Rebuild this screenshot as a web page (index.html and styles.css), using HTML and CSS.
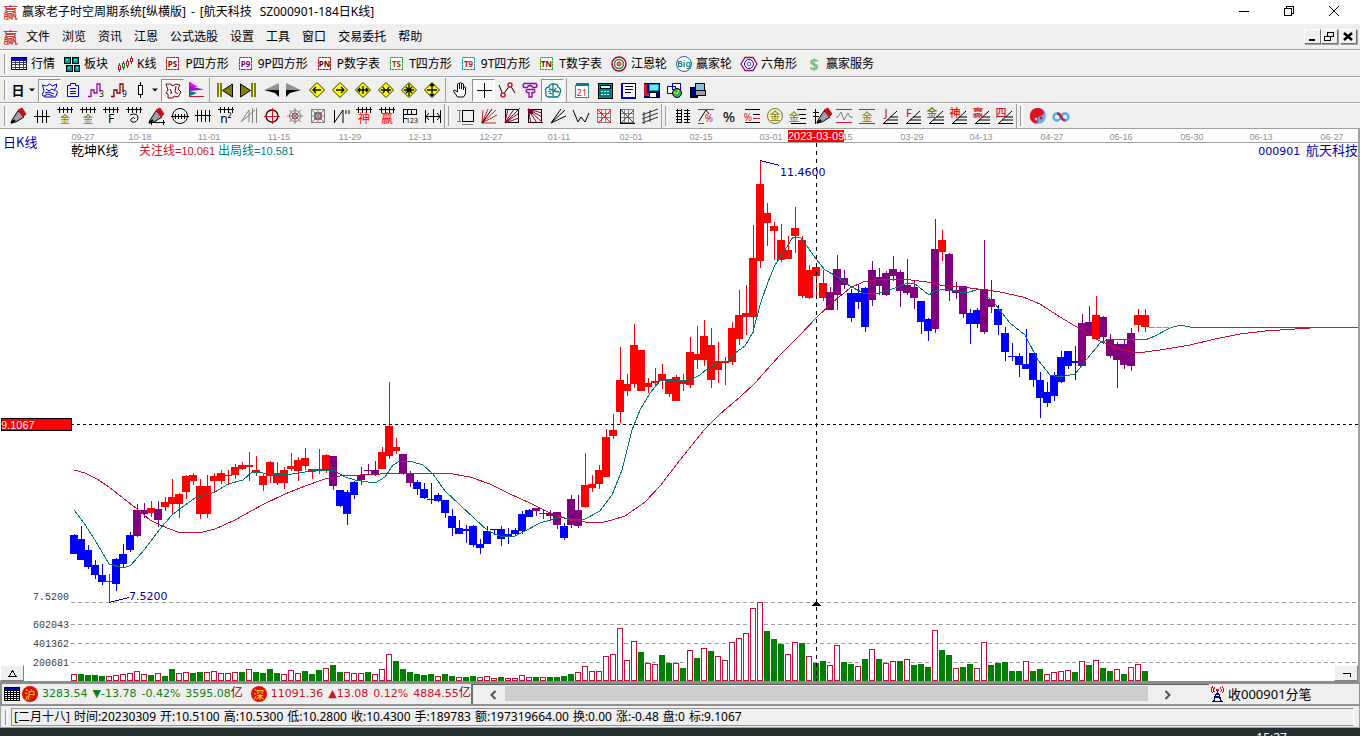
FILE: index.html
```html
<!DOCTYPE html>
<html lang="zh-CN">
<head>
<meta charset="utf-8">
<title>赢家老子时空周期系统[纵横版]</title>
<link rel="stylesheet" href="styles.css">
</head>
<body>
<div class="app">
  <header class="titlebar">
    <span class="brand">赢</span>
    <h1 class="title"><span>赢家老子时空周期系统[纵横版]</span><span>-</span><span>[航天科技</span><span class="symbol">SZ000901-184日K线]</span></h1>
    <div class="winctl">
      <button aria-label="最小化"><svg width="12" height="12"><path d="M1 6.5H11"/></svg></button>
      <button aria-label="还原"><svg width="12" height="12"><path d="M1.5 3.5h7v7h-7zM3.5 3.5v-2h7v7h-2"/></svg></button>
      <button aria-label="关闭"><svg width="12" height="12" class="smooth"><path d="M1 1L11 11M11 1L1 11"/></svg></button>
    </div>
  </header>
  <nav class="menubar">
    <span class="brand">赢</span>
    <button>文件</button><button>浏览</button><button>资讯</button><button>江恩</button><button>公式选股</button><button>设置</button><button>工具</button><button>窗口</button><button>交易委托</button><button>帮助</button>
    <div class="mdictl">
      <button aria-label="最小化窗口"><svg width="12" height="11"><path d="M3 9h6" stroke-width="2"/></svg></button>
      <button aria-label="还原窗口"><svg width="12" height="11"><path d="M1.5 5.5h6v4h-6zM1 5h7M4.5 4.5v-3h6v4h-3M4 1h7"/></svg></button>
      <button aria-label="关闭窗口" class="gap"><svg width="12" height="11" class="smooth"><path d="M2 2L10 9M10 2L2 9" stroke-width="2.4"/></svg></button>
    </div>
  </nav>
  <div class="toolbar labelled" id="bar-main"><i class="grip"></i></div>
  <div class="toolbar" id="bar-view"><i class="grip"></i></div>
  <div class="toolbar" id="bar-draw"><i class="grip"></i></div>
  <main class="chart">
    <svg id="plot" role="img" aria-label="航天科技 日K线"></svg>
    <button class="corner left" aria-label="展开"><svg width="11" height="9"><path d="M5.5 1.5L9 7.5H2z" fill="none" stroke="#000"/></svg></button>
    <button class="corner right" aria-label="收起"><svg width="11" height="9"><path d="M2 4.5h7v3" fill="none" stroke="#000"/></svg></button>
  </main>
  <section class="quotes">
    <div class="index">
      <svg class="sheet" width="16" height="14"><path d="M0 0h16v14H0z" fill="#000"/><path d="M1 1h14v2H1z" fill="#0000c0"/><path d="M1 4.500h14M1 6.500h14M1 8.500h14M1 10.500h14M1 12.500h14" stroke="#fff" stroke-dasharray="2 1"/></svg>
      <b class="badge">沪</b>
      <p class="down"><span>3283.54</span><span>▼-13.78</span><span>-0.42%</span><span>3595.08<em>亿</em></span></p>
      <b class="badge second">深</b>
      <p class="up"><span>11091.36</span><span>▲13.08</span><span>0.12%</span><span>4884.55<em>亿</em></span></p>
    </div>
    <div class="scroll">
      <button aria-label="向左滚动"><svg width="8" height="10"><path d="M6.500 1L2.500 5L6.500 9"/></svg></button>
      <div class="track"><div class="thumb"></div></div>
      <button aria-label="向右滚动"><svg width="8" height="10"><path d="M1.500 1L5.500 5L1.500 9"/></svg></button>
    </div>
    <div class="feed">
      <svg width="13" height="17"><path d="M6.500 5v3M5 8l-2 7M8 8l2 7M5 8h3M4 11h5M1 15.500h11" fill="none" stroke="#000080" stroke-width="1.500"/><circle cx="6.500" cy="4" r="1.500" fill="#d01020"/><path d="M3.500 1.500q-1.500 2.500 0 5M9.500 1.500q1.500 2.500 0 5M1.500.500q-2 3.500 0 7M11.500.500q2 3.500 0 7" fill="none" stroke="#d01020"/></svg>
      <span>收000901分笔</span>
    </div>
  </section>
  <footer class="status"><i class="grip"></i><p><span>[二月十八]</span><span>时间:20230309</span><span>开:10.5100</span><span>高:10.5300</span><span>低:10.2800</span><span>收:10.4300</span><span>手:189783</span><span>额:197319664.00</span><span>换:0.00</span><span>涨:-0.48</span><span>盘:0</span><span>标:9.1067</span></p></footer>
  <div class="taskbar"><time>15:27</time></div>
</div>
<script src="app.js"></script>
</body>
</html>
```

FILE: styles.css
```css
* { box-sizing: border-box; }
body {
  margin: 0;
  font: 12px/16px "Noto Sans", "Noto Sans CJK SC", sans-serif;
  color: #000;
  background: #efefef;
}
button { font: inherit; color: inherit; background: none; border: 0; padding: 0; margin: 0; }
.app { display: flex; flex-direction: column; height: 100vh; min-height: 480px; overflow: hidden; }
.app svg { shape-rendering: crispEdges; display: block; flex: none; }
.app svg.smooth, .app .smooth { shape-rendering: auto; }

.brand { color: #c01020; font: 15px/18px "Noto Sans CJK SC", sans-serif; width: 15px; }
.titlebar { display: flex; align-items: center; flex: none; height: 24px; padding-left: 3px; gap: 4px; background: #fff; }
.title { display: flex; gap: 5px; margin: 0; font-size: 12px; font-weight: 400; line-height: 18px; white-space: nowrap; }
.title .symbol { padding-left: 3px; }
.winctl { display: flex; margin-left: auto; padding: 0 4px 3px 0; }
.winctl button { width: 45px; height: 20px; display: flex; align-items: center; justify-content: center; }
.winctl path, .mdictl path { fill: none; stroke: #000; }

.menubar { display: flex; align-items: center; flex: none; height: 26px; padding: 0 3px; border-bottom: 1px solid #a0a0a0; }
.menubar > button { padding: 0 6px; white-space: nowrap; }
.menubar > .brand + button { margin-left: 2px; }
.mdictl { display: flex; margin-left: auto; }
.mdictl button { width: 17px; height: 15px; padding: 1px; border: 1px solid; border-color: #fff #707070 #707070 #fff; box-shadow: 1px 1px 0 #a0a0a0; }
.mdictl .gap { margin-left: 2px; }

.toolbar { display: flex; align-items: center; flex: none; height: 26px; padding-left: 4px; border-top: 1px solid #fff; border-bottom: 1px solid #a0a0a0; overflow: hidden; }
.labelled { height: 27px; }
.grip { flex: none; width: 3px; height: 20px; border-left: 1px solid #a0a0a0; border-right: 1px solid #fff; }
.sep { flex: none; width: 1px; height: 100%; margin: 0 3px 0 2px; background: #a0a0a0; }
.sep.tight { margin: 0 1px 0 0; }
.sep + .grip { margin: 0 3px 0 2px; }
.tool { flex: none; width: 23px; height: 23px; display: flex; align-items: center; justify-content: center; }
.tool.split { width: 31px; }
.tool.on { background: #f8f8f8; border: 1px solid; border-color: #909090 #fff #fff #909090; }
.labelled .tool { width: auto; padding: 0 5px 0 2px; gap: 2px; white-space: nowrap; }
.tool svg { overflow: visible; }
.tool svg text { font-family: "Noto Sans", "Noto Sans CJK SC", sans-serif; }

.chart { position: relative; flex: 1; min-height: 0; background: #fff; border-right: 2px solid #a0a0a0; border-bottom: 2px solid #8c8c8c; }
.chart > svg { width: 100%; height: 100%; }
.chart text { font: 13px "Noto Sans CJK SC", sans-serif; }
.chart text.line { font-size: 12px; }
.chart text.line tspan { font: 11px "Liberation Sans", sans-serif; }
.chart text.date { font: 9px "Liberation Sans", sans-serif; fill: #909090; text-anchor: middle; }
.chart text.picked { font: 11px "Liberation Sans", sans-serif; fill: #fff; }
.chart text.scale { font: 10px "Liberation Mono", monospace; fill: #404040; text-anchor: end; }
.chart text.mark { font: 11px "DejaVu Sans", sans-serif; fill: #0000a0; }
.chart text.code { fill: #0000a0; text-anchor: end; }
.chart text.code tspan { font: 11px "DejaVu Sans", sans-serif; }
.corner { position: absolute; bottom: 0; width: 24px; height: 16px; display: flex; align-items: center; justify-content: center; background: #efefef; border: 1px solid; border-color: #fff #808080 #808080 #fff; }
.corner.left { left: 0; }
.corner.right { right: 0; }

.quotes { display: flex; flex: none; height: 23px; border: 1px solid #909090; border-left-width: 2px; border-bottom-width: 2px; background: #efefef; }
.index { display: flex; align-items: center; flex: 0 0 469px; overflow: hidden; white-space: nowrap; padding-left: 2px; font: 11px/16px "DejaVu Sans", sans-serif; }
.index p { display: flex; align-items: baseline; gap: 5px; margin: 0; }
.index em { font: 12px/12px "Noto Sans CJK SC", sans-serif; color: #800000; }
.badge { flex: none; width: 16px; height: 16px; margin: 0 4px 0 2px; border-radius: 50%; background: #e01000; color: #ffe000; font: 11px/16px "Noto Sans CJK SC", sans-serif; text-align: center; }
.badge.second { margin-left: 8px; }
.down { color: #108010; }
.up { color: #d01020; }
.scroll { display: flex; flex: 1; border-top: 1px solid #606060; border-left: 2px solid #707070; padding: 0 21px 0 8px; }
.scroll button { width: 24px; display: flex; align-items: center; justify-content: center; }
.scroll button + .track + button { width: 40px; }
.scroll path { fill: none; stroke: #505050; stroke-width: 2; shape-rendering: auto; }
.track { flex: 1; display: flex; padding: 1px 0 3px; }
.thumb { flex: 1; background: #cdcdcd; }
.feed { display: flex; align-items: center; flex: 0 0 150px; padding-left: 2px; gap: 4px; font-size: 13px; white-space: nowrap; }
.status { display: flex; align-items: center; flex: none; height: 22px; padding: 2px 5px 1px 4px; gap: 3px; border-left: 1px solid #a0a0a0; border-right: 1px solid #a0a0a0; border-bottom: 1px solid #a0a0a0; }
.status .grip { height: 15px; }
.status p { display: flex; gap: 4px; flex: 1; margin: 0; padding-left: 2px; border: 1px solid; border-color: #909090 #fff #909090 #909090; white-space: nowrap; overflow: hidden; }
.taskbar { flex: none; height: 8px; background: #24302f; color: #fff; overflow: hidden; text-align: right; padding: 2px 73px 0 0; }
.taskbar time { display: block; }
```

FILE: app.js
```js
const K = '#000', R = '#d01828', G = '#808000', B = '#0000c0', T = '#008080', GR = '#808080', V = '#a000a0', DR = '#800000';
const p = (d, c = K, f = 'none', w = 1, cls = '') => `<path d="${d}" stroke="${c}" fill="${f}" stroke-width="${w}" class="${cls}"/>`;
const s = (d, c = K, f = 'none', w = 1) => p(d, c, f, w, 'smooth');
const ci = (r, c, f = 'none', w = 1, x = 10, y = 10) => `<circle class="smooth" cx="${x}" cy="${y}" r="${r}" stroke="${c}" fill="${f}" stroke-width="${w}"/>`;
const t = (str, x, y, size, c = K, weight = 400) => `<text x="${x}" y="${y}" font-size="${size}" fill="${c}" font-weight="${weight}" text-anchor="middle">${str}</text>`;
const svg = (body, w = 20) => `<svg width="${w}" height="20" viewBox="0 0 ${w} 20">${body}</svg>`;

const tag = (str, c, tc) => `<rect x="3.5" y="3.5" width="12" height="12" fill="#fff" stroke="${c}" stroke-opacity=".5"/>` + `<path d="M3.5 3.5h12v12h-12z" fill="none" stroke="${c}" stroke-dasharray="2 1"/>` + t(str, 9.5, 13, 8, tc, 700);
const main = [
  ['行情', p('M2.500 3.500h15v12h-15z', K, '#fff') + p('M2 5h16', B, 'none', 3) + p('M2 8.500h16M2 10.500h16M2 13.500h16M6.500 7v9M10.500 7v9M14.500 7v9', '#404040')],
  ['板块', p('M2.500 3.500h6v6h-6zM10.500 3.500h6v6h-6zM4.500 11.500h6v6h-6zM12.500 11.500h5v6h-5z', K, '#008c8c') + p('M4.500 5.500h1v1h-1zM12.500 5.500h2v1h-2zM6.500 13.500h1v1h-1zM14.500 13.500h1v1h-1z', '#00e8e8', '#00e8e8')],
  ['K线', p('M4.500 9v9M12.500 5v9', R) + p('M8.500 7v9', '#008020') + p('M16.500 2v8', R) + p('M3.500 11.500h2v4h-2zM11.500 7.500h2v4h-2zM15.500 4.500h2v3h-2z', R, '#fff') + p('M7.500 9.500h2v4h-2z', '#008020', '#fff')],
  ['P四方形', tag('PS', '#c01020', '#800000')], ['9P四方形', tag('P9', '#c000c0', '#800080')],
  ['P数字表', tag('PN', '#c01020', '#500000')], ['T四方形', tag('TS', '#20b020', '#c02020')],
  ['9T四方形', tag('T9', '#00a0a0', '#c02020')], ['T数字表', tag('TN', '#20b020', '#900000')],
  ['江恩轮', ci(7, '#901030', '#fff', 1.5) + ci(4.5, '#308040', 'none', 1.5) + ci(2, R, '#f08080')],
  ['赢家轮', ci(7.5, '#3060a0', '#fff') + t('Big', 10, 13, 9, '#108060', 600)],
  ['六角形', s('M6 3.500h8l4 6.500-4 6.500H6L2 10z', '#901040', '#fff', 1.3) + ci(4.5, B) + ci(2, '#4040ff')],
  ['赢家服务', t('$', 10, 16, 16, '#80b880', 700)]
];

const diamond = d => s('M10 2.500L17.500 10 10 17.500 2.500 10z', '#303000', '#ffff00') + p(d, K, 'none', 1.3, 'smooth');
const view = [
  ['日线', t('日', 9, 14.5, 13, K, 700) + s('M20 8.500h6l-3 3z', 'none', K), 'split', 28],
  ['云图', s('M2.500 5l4 1 3-2 3 2 4-2v3l-2 2 3 3-2 5H5l-3-2 2-4zM6 9l3 2 3-2 3 2M5 13l4-1 5 2M4 16l4-2 5 2', B), 'on'],
  ['列表', s('M7.500 3.500h5v2h3v11h-11v-11h3zM7 8.500h6M7 11.500h6M7 13.500h6', B)],
  ['三浪', s('M2 16.500h3V10h3v3h3V4h3v8', V, 'none', 1.3) + t('3', 15.5, 17, 8)],
  ['九浪', s('M2 16.500h3V10h3v3h3V4h3v8', DR, 'none', 1.3) + t('9', 15.5, 17, 8)],
  ['蜡烛', p('M7.500 2v16') + p('M5.500 5.500h4v9h-4z', K, '#fff') + s('M19 8.500h6l-3 3z', 'none', K), 'split', 26],
  ['花纹', s('M3 4h5l1 2 4-2 4 1-2 4 3 3-3 5-4-1-1 2H5v-4l-2-1 2-3zM7 9l2 4M13 6l-1 6 3 2M7 13h2', DR), 'on'],
  ['旗帜', s('M4 2l8 5H4z', 'none', '#ff00ff') + s('M4 6l14 3.500L4 11z', 'none', '#8020c0') + s('M4 11l7 2-7 3z', 'none', T) + p('M3.500 2v15M3 16.500h15', R)],
  '|',
  ['首条', p('M3 3v14M6 3v14', G, 'none', 2) + s('M17.500 4v13L7.500 10.500z', K, G)],
  ['末条', p('M14 3v14M17 3v14', G, 'none', 2) + s('M2.500 4v13l10-6.500z', K, G)],
  ['后退', s('M18 3v7H3z', 'none', '#909090') + s('M3 10h15v7l-4-4z', 'none', K)],
  ['前进', s('M2 3v7h15z', 'none', '#909090') + s('M17 10H2v7l4-4z', 'none', K)],
  ['左移', diamond('M14 10H6M9 7l-3 3 3 3')], ['右移', diamond('M6 10h8M11 7l3 3-3 3')],
  ['横向放大', diamond('M5 10h10M7 8l-2 2 2 2M13 8l2 2-2 2M10 6v8')], ['横向缩小', diamond('M5 10h10M7 7l2 3-2 3M13 7l-2 3 2 3')],
  ['全部缩小', diamond('M5 10h10M10 4v12M7 7l6 6M13 7l-6 6')], ['纵向放大', diamond('M5 10h10M10 4v12M8 6l2-2 2 2M8 14l2 2 2-2')],
  '|',
  ['手形', s('M6.500 17l-4-6 1-1 3 2V4q1-1 2 0v5-6q1-1 2 0v6-5q1-1 2 0v6-3q2-1 2 1v6l-2 3z', K, '#fff')],
  ['十字线', p('M10.500 3v15M3 10.500h15'), 'on'],
  ['趋势', s('M2 5l4 10 7-10 5 8', K) + ci(2, R, '#fff', 1.5, 6, 15) + ci(2, R, '#fff', 1.5, 13, 5)],
  ['树图', s('M4 3.500h12q2 2 0 4h-3q-1-2-3-2t-3 2H4q-2-2 0-4zM7 9.500h7q2 2 0 3h-2v4.500H9V12.500H7q-2-1 0-3z', '#9000b0', 'none', 1.3)],
  ['脑图', s('M3 12q-2-4 3-5 1-4 5-3 4 0 4 3 4 2 2 6-1 4-4 4H5q-3-1-2-5zM6 9l4 1M10 4v12M13 8l-2 3 5 1M6 13l3 1M5 11l3 1', T, 'none', 1.3), 'on'],
  '|',
  ['日历', p('M3.500 5.500h13v12h-13z', '#309090', '#fff') + p('M4 4h13', T, 'none', 3) + t('21', 10, 16, 9, R)],
  ['计算器', p('M3 3h14v15H3z', K, '#008080') + p('M5 5h10v3H5z', K, '#c0ffff') + `<path d="M6 11.500h9M6 14.500h9" stroke="#c0ffff" stroke-dasharray="2 1"/>`],
  ['笔记', p('M4 3h13v14H4z', K, '#fff') + p('M4 3v15M3 17.500h15', B, 'none', 2) + p('M7 6.500h8M7 9.500h8M7 12.500h6')],
  ['保存', p('M3 3h15v14H3z', K, '#0000a0') + p('M8 4h9v6H8z', '#00a0c0', '#80e0e0') + p('M4 4v10h4', R, 'none', 3) + p('M8 12h7v5H8z', K, '#fff')],
  ['网络', p('M3 6h8v7H3zM8 3h8v6H8z', B, '#fff') + ci(4.5, K, '#30b060', 1, 13, 13) + s('M10 12l3 2 2-4', '#fff000')],
  ['打印', p('M8 3h9v7H8z', K, '#80c0e0') + p('M6 10h12v5H6z', K, '#a0a0a0') + p('M3 7h5v9H3z', K, '#0000a0') + p('M3 17h8', K, 'none', 2)]
];

const pen = s('M3 14l6-9 6 6-8 5-5 1z', K, '#a0a0a0') + s('M9 4l4-2 4 6-3 3z', R, '#c01010') + s('M2 17l4-3', K, 'none', 2);
const comb = p('M2 3.500h16M4.500 1v6M8.500 1v6M12.500 1v6M16.500 1v6');
const fan = (x, c) => s('M3 17.500h15M4 17L17 5M7 14h11M10 11h8') + t(x, 6, 11, 11, c, 500);
const grid = p('M3.500 3.500h13v13h-13zM3 7.500h14M3 11.500h14M7.500 3v14M11.500 3v14', GR);
const draw = [
  ['画笔', pen], ['竖线组', p('M2 10.500h16M5.500 4v13M10.500 4v13M14.500 4v13')],
  ['金尺一', comb + t('金', 10, 17, 10, G)], ['金尺二', comb + t('金', 10, 17, 10, G)], ['F尺', comb + t('F', 10, 17, 12)],
  ['螺旋', comb + s('M6 9q8-3 8 3-1 5-6 4-3-2 0-4 2-1 3 1')], ['画笔尺', pen + p('M2 16.500h16M4.500 14v5M16.500 14v5')],
  ['圆尺', ci(7.5, K) + p('M1 10.500h18M5.500 8v5M8.500 8v5M11.500 8v5M14.500 8v5')], ['四线', p('M2 9.500h16M4.500 4v12M8.500 4v12M12.500 4v12M16.500 4v12')],
  ['n²', comb + t('n²', 10, 17, 12)], ['三角', s('M2 16L10 4v12M2 16L16 4M13.500 2v15M17.500 2v15', GR)],
  ['圆心', ci(6, '#400000', 'none', 1.4) + p('M2 10.500h16M10.500 2v16', R)],
  ['星形', ci(5.5, GR) + ci(3, R) + s('M10 2v16M2 10h16M4 4l12 12M16 4L4 16', GR)],
  ['方形', p('M3.500 3.500h13v13h-13zM6.500 6.500h7v7h-7z', GR) + ci(3, R) + s('M10 3v14M3 10h14M3 3l14 14M17 3L3 17', GR)],
  ['折线', s('M3.500 4v13M3 17L12 4v13M15 4v4M18 4v4')], ['神尺', comb + t('神', 10, 17, 12, '#ff0000')], ['赢尺', comb + t('赢', 10, 17, 12, '#ff0000')],
  ['数尺', p('M3 3.500h14M3.500 3v14M3 8.500h14M3 12.500h4M16.500 3v6M7.500 3v5M11.500 3v5') + t('123', 12, 17, 7)], ['宽度', p('M2.500 4v13M17.500 4v13M10.500 3v14M3 10.500h14') + s('M6 7l-3 3.500L6 14M14 7l3 3.500L14 14')],
  '+',
  ['框选', p('M6.500 4.500h11v11h-11z') + p('M3.500 4v12M1 4.500h4M1 15.500h4M6 18h11', GR)],
  ['扇形', s('M3 17L4 4M3 17L9 3M3 17L17 4M3 17l15-8M3 17h14', R) + s('M3 17L13 3', K)],
  ['方扇', p('M3.500 3.500h13v13h-13z') + s('M3 17L6 3M3 17L12 3M3 17L18 2M3 17l14-10M3 17l14-5', '#900030')],
  ['反扇', p('M3.500 3.500h13v13h-13z') + s('M3 3h5v5H3z', 'none', DR) + s('M3 3l3 14M3 3l9 14M3 3l15 14M3 3l14 8M3 3l14 4', '#900030')],
  ['射线', s('M3 17L17 4M3 17L13 3M3 17l15-7')], ['波浪', s('M2 4l5 12 3-5 4 5 4-9')],
  ['网格', grid + s('M4 4l13 13M17 4L4 17', R)], ['点网', grid + s('M4 4l13 13M17 4L4 17', R) + p('M3.500 3v14h14')], ['平行', s('M2 9l16-6M2 13l16-6M2 17l16-6M4 6v12M10 4v12', '#303030')],
  '+',
  ['标尺', p('M4.500 3v14M8.500 3v14M3 4.500h5M3 7.500h5M3 10.500h5M3 13.500h5M3 16.500h5M11 4.500h6M11 7.500h6M11 10.500h6M11 13.500h6M11 16.500h6M14.500 3v14')],
  ['百分比线', p('M2 3.500h16M2 17.500h6', R) + s('M3 15L10 4l3 4') + t('%', 13, 16, 10, R)],
  ['百分比', t('%', 10, 16, 15)], ['百分尺', p('M3 3.500h15M11 8.500h7M3 16.500h15') + t('%', 6, 15, 10, R) + p('M11 12.500h7', R)],
  ['金圆', ci(7.5, G) + t('金', 10, 14, 11, G)], ['金线', p('M9 3.500h9M11 8.500h7M3 17.500h15M12 12.500h6') + t('金', 6, 15, 11, G)],
  ['笔尺', `<g transform="translate(4 0)">${pen}</g>` + p('M4.500 3v15M2 6.500h6M2 10.500h6')], ['正弦', p('M2 3.500h16M2 16.500h16', R) + s('M2 11h2l3-5 3 8 4-7 2 4h3', GR)],
  ['金框', p('M2 3.500h16M2 17.500h16', R) + t('金', 10, 15, 11, G)],
  ['J线', fan('J', R)], ['F线', fan('F', '#ff0000')], ['金扇', fan('金', G)], ['神扇', fan('神', '#ff0000')], ['赢扇', fan('赢', R)], ['四扇', fan('四', R)],
  '+',
  ['太极', ci(8, 'none', '#68b0f0') + s('M10 2a8 8 0 0 0-4 15q4 1 4-3-1-3 2-4 4-1 4-4-2-4-6-4z', 'none', '#e01020') + ci(1.5, 'none', '#e01020', 1, 13, 12) + ci(1.5, 'none', '#a0d0ff', 1, 8, 13)],
  ['无穷', ci(3.5, '#58a8e8', 'none', 2.4, 6, 11) + ci(3.5, '#58a8e8', 'none', 2.4, 14, 11) + s('M6 7.500q3 0 4 3t4 4', '#c02040', 'none', 2.4)]
];

const build = (id, items, labelled) => {
  document.getElementById(id).insertAdjacentHTML('beforeend', items.map(it => {
    if (it === '|') return '<i class="sep"></i>';
    if (it === '+') return '<i class="sep tight"></i><i class="grip"></i>';
    const [name, body, cls = '', w] = it;
    return `<button class="tool ${cls}" aria-label="${name}" title="${name}">${svg(body, w)}${labelled ? `<span>${name}</span>` : ''}</button>`;
  }).join(''));
};
build('bar-main', main, true);
build('bar-view', view);
build('bar-draw', draw);

/* colour, high, body top, body bottom, low */
const candles = `B534 535 554 554|B526 539 560 560|B545 550 567 569|B560 565 575 579|B564 575 582 585|R574 581 582 602|B558 559 584 591|B544 554 564 567|B532 535 550 552|P504 510 536 537|P503 510 514 518|R501 508 513 517|P501 509 520 527|R497 502 507 511|R479 497 504 515|R493 494 504 518|R475 476 492 499|R473 475 481 485|R479 486 514 519|R475 486 514 518|R473 476 481 492|R470 473 481 484|R470 475 476 485|R464 467 475 479|R462 465 469 470|R452 465 467 481|R456 470 472 476|R474 476 485 491|R461 462 476 483|R462 473 483 485|R467 470 483 489|R453 466 469 471|R457 460 471 481|R448 458 466 470|R469 469 472 479|R449 469 471 474|R454 455 471 473|P456 456 486 490|B490 490 506 507|B490 492 514 525|B481 482 495 499|P467 475 480 485|P464 470 471 475|P461 470 475 476|R447 452 469 469|R382 426 456 459|R438 447 451 454|P454 454 473 475|P471 473 483 487|B480 482 489 495|B483 489 498 499|B483 499 500 504|B493 495 501 502|B500 500 513 518|B509 516 528 536|B520 528 534 534|B525 529 531 543|B525 526 545 547|B539 544 548 554|B526 531 544 544|B529 529 530 535|B526 529 539 546|B528 534 536 544|B528 530 534 535|B511 514 531 534|B509 510 517 517|P508 508 511 516|P509 513 514 519|P510 513 516 521|P512 512 525 529|B523 526 538 540|P495 499 525 528|P495 510 526 528|R453 485 507 508|R475 484 488 492|R465 470 484 489|R429 437 477 477|R414 430 436 439|R347 380 412 423|R374 384 391 396|R324 345 384 388|R350 350 391 391|R378 383 387 393|R368 381 383 387|R364 374 381 389|R379 379 394 397|R375 377 401 401|R374 381 384 391|R337 352 385 388|R326 354 360 369|R320 336 360 366|R328 345 380 388|R342 361 370 383|R357 361 363 385|R322 328 362 365|R290 315 339 345|R285 313 317 335|R225 258 317 333|R160 184 261 268|R203 213 223 246|R222 226 231 260|R224 240 260 262|R236 250 259 259|R207 228 236 253|R236 240 296 298|R265 270 298 299|R265 267 276 296|R270 283 298 301|P287 292 310 310|P255 269 295 310|P270 278 285 289|B289 293 318 322|B285 293 302 309|B287 288 327 332|P261 270 300 306|P268 277 286 295|P271 273 295 296|P256 269 276 281|P270 272 291 307|P259 285 293 295|P280 287 298 309|B301 301 322 334|B318 319 331 341|P219 249 329 333|R230 240 252 261|P253 254 291 301|P282 290 293 299|P286 286 314 318|B309 313 324 344|B308 310 324 328|P240 289 332 334|P280 299 307 313|B305 309 325 335|B327 333 352 361|B343 356 357 361|B353 356 365 377|B329 364 369 369|B353 353 380 387|B372 380 398 418|B382 392 403 407|B372 375 396 401|B351 357 382 383|B351 351 366 369|B346 361 363 380|P314 323 366 366|P306 322 336 336|R296 315 339 340|P316 317 337 344|P334 339 356 358|P342 344 360 388|P340 344 365 369|P328 333 366 371|R309 315 325 332|R309 315 327 332`.split('|');

/* r = rising (outlined), g = falling (filled); number = top of the bar */
const volumes = `r674 g674 g675 g675 g676 r676 r675 r674 r673 r671 r674 g675 r673 g676 g669 r673 r672 g673 g672 r672 r671 r673 r673 r672 g672 r669 g672 g673 g669 g673 r674 r670 r673 g671 g674 g670 r668 g665 g672 r672 r673 r673 g672 r674 r669 r654 g661 g669 g672 g674 g675 g674 r676 g674 g676 r677 g677 g676 r677 r676 r678 g677 r678 r678 r675 r677 g677 r677 g677 g677 g676 g674 r672 r666 r671 r671 r656 r654 r628 r660 r641 g652 r663 r664 g655 g663 r663 g668 r650 g658 r648 g651 r656 r660 r642 r638 r633 r608 r602 g631 g639 g644 r654 r642 g643 r656 g663 g661 r665 r645 g662 g664 r666 g659 r649 g659 r663 r661 g661 r659 g665 g664 g667 r630 g650 g655 r668 g667 g664 r668 r642 g665 g663 g662 g671 g671 r661 g671 g669 r674 r672 r671 r670 g672 r661 g665 r660 g668 g671 r669 g674 r667 r664 g671`.split(' ');

const slow = '74,470 85,473 97,479 109,487 123,498 137,509 150,520 162,526 178,532 190,533 203,532 215,529 235,520 262,505 285,494 305,486 325,479 340,476 360,475 380,474 400,473 447,473 470,477 490,484 510,494 530,503 550,513 570,520 585,522 600,523 612,520 625,516 645,502 660,486 680,460 704,430 720,414 740,397 755,383 780,355 800,335 817,317 833,302 850,288 863,282 880,279 903,279 927,282 940,285 970,288 1000,292 1023,297 1040,304 1060,317 1080,329 1100,341 1120,349 1137,353 1160,350 1190,345 1215,339 1240,334 1265,331 1310,328';
const fast = '74,510 84,523 98,545 109,564 124,568 131,565 145,549 160,529 172,515 185,505 195,498 215,492 228,484 243,480 252,472 285,475 305,472 320,470 335,471 345,477 355,480 375,483 385,477 393,465 400,461 413,462 423,465 433,474 445,491 460,505 475,519 488,531 500,536 515,536 525,531 540,523 560,517 575,520 585,519 600,511 612,495 622,470 632,430 640,410 650,393 660,381 690,380 700,375 707,369 720,362 728,361 735,353 745,346 753,332 760,305 768,282 775,265 785,250 793,237 800,237 807,246 816,259 825,270 838,277 850,286 865,294 880,293 895,288 905,284 914,283 929,295 935,291 945,289 965,293 980,289 995,304 1010,323 1025,335 1038,360 1050,375 1060,377 1075,374 1087,359 1100,343 1110,339 1145,340 1155,336 1170,328 1180,325 1190,327';
const dates = [[83, '09-27'], [140, '10-18'], [209, '11-01'], [279, '11-15'], [350, '11-29'], [420, '12-13'], [491, '12-27'], [559, '01-11'], [631, '02-01'], [701, '02-15'], [771, '03-01'], [841, '03-15'], [912, '03-29'], [981, '04-13'], [1052, '04-27'], [1121, '05-16'], [1192, '05-30'], [1261, '06-13'], [1332, '06-27']];
const colours = { R: '#ff0000', B: '#0000ff', P: '#800080' };

const label = (x, y, str, cls = '', fill = '') => `<text x="${x}" y="${y}" class="${cls}"${fill && ` fill="${fill}"`}>${str}</text>`;
const rule = (y, c, dash) => `<line x1="71" x2="100%" y1="${y}.5" y2="${y}.5" stroke="${c}" stroke-dasharray="${dash}"/>`;
let out = rule(142, '#a0a0a0', 'none');
out += [602, 624, 643, 662].map(y => rule(y, '#a0a0a0', '4 3')).join('');
out += volumes.map((v, i) => {
  const x = 71 + i * 7, y = +v.slice(1);
  return v[0] === 'g'
    ? `<rect x="${x}" y="${y}" width="6" height="${681 - y}" fill="#008000"/>`
    : `<rect x="${x}.5" y="${y}.5" width="5" height="${680 - y}" fill="#fff" stroke="#c81030"/>`;
}).join('');
out += candles.map((c, i) => {
  const x = 70 + i * 7, col = colours[c[0]];
  const [hi, top, bot, lo] = c.slice(1).split(' ').map(Number);
  return `<rect x="${x + 4}" y="${hi}" width="1" height="${lo - hi}" fill="${col}"/><rect x="${x}" y="${top}" width="8" height="${bot - top}" fill="${col}"/>`;
}).join('');
out += `<polyline points="${slow}" fill="none" stroke="#c81030"/><polyline points="${fast}" fill="none" stroke="#007878"/>`;
out += '<line x1="1190" x2="100%" y1="327.5" y2="327.5" stroke="#007878"/><path d="M1149 327.500h22" stroke="#909090" stroke-dasharray="6 1"/>';
out += rule(424, '#000', '3 3') + '<path d="M816.500 143V681" stroke="#000" stroke-dasharray="4 4"/><path d="M812 606h9l-4.500-5z"/>';
out += '<path d="M1 418h70v12H1z" fill="#ff0000" stroke="#000"/><path d="M0 418v12" stroke="#fff"/>' + label(1, 429, '9.1067', 'picked');
out += dates.map(([x, d]) => label(x, 140, d, 'date')).join('');
out += '<path d="M788 130h56v12h-56z" fill="#ff0000"/>' + label(788, 140, '2023-03-09', 'picked');
out += label(3, 147, '日K线', '', '#0000a0') + label(71, 155, '乾坤K线') + label(139, 155, '关注线<tspan>=10.061</tspan>', 'line', '#d01020') + label(218, 155, '出局线<tspan>=10.581</tspan>', 'line', '#008080');
out += '<text x="100%" y="155" class="code"><tspan>000901</tspan>&#160; 航天科技</text>';
out += '<path d="M760.500 160.500l19 5M109 602.500l20-5" stroke="#0000a0"/>' + label(780, 176, '11.4600', 'mark') + label(129, 600, '7.5200', 'mark');
out += label(69, 600, '7.5200', 'scale') + label(69, 628, '602043', 'scale') + label(69, 647, '401362', 'scale') + label(69, 666, '200681', 'scale');
document.getElementById('plot').innerHTML = `<g transform="translate(0 -129)">${out}</g>`;
```
